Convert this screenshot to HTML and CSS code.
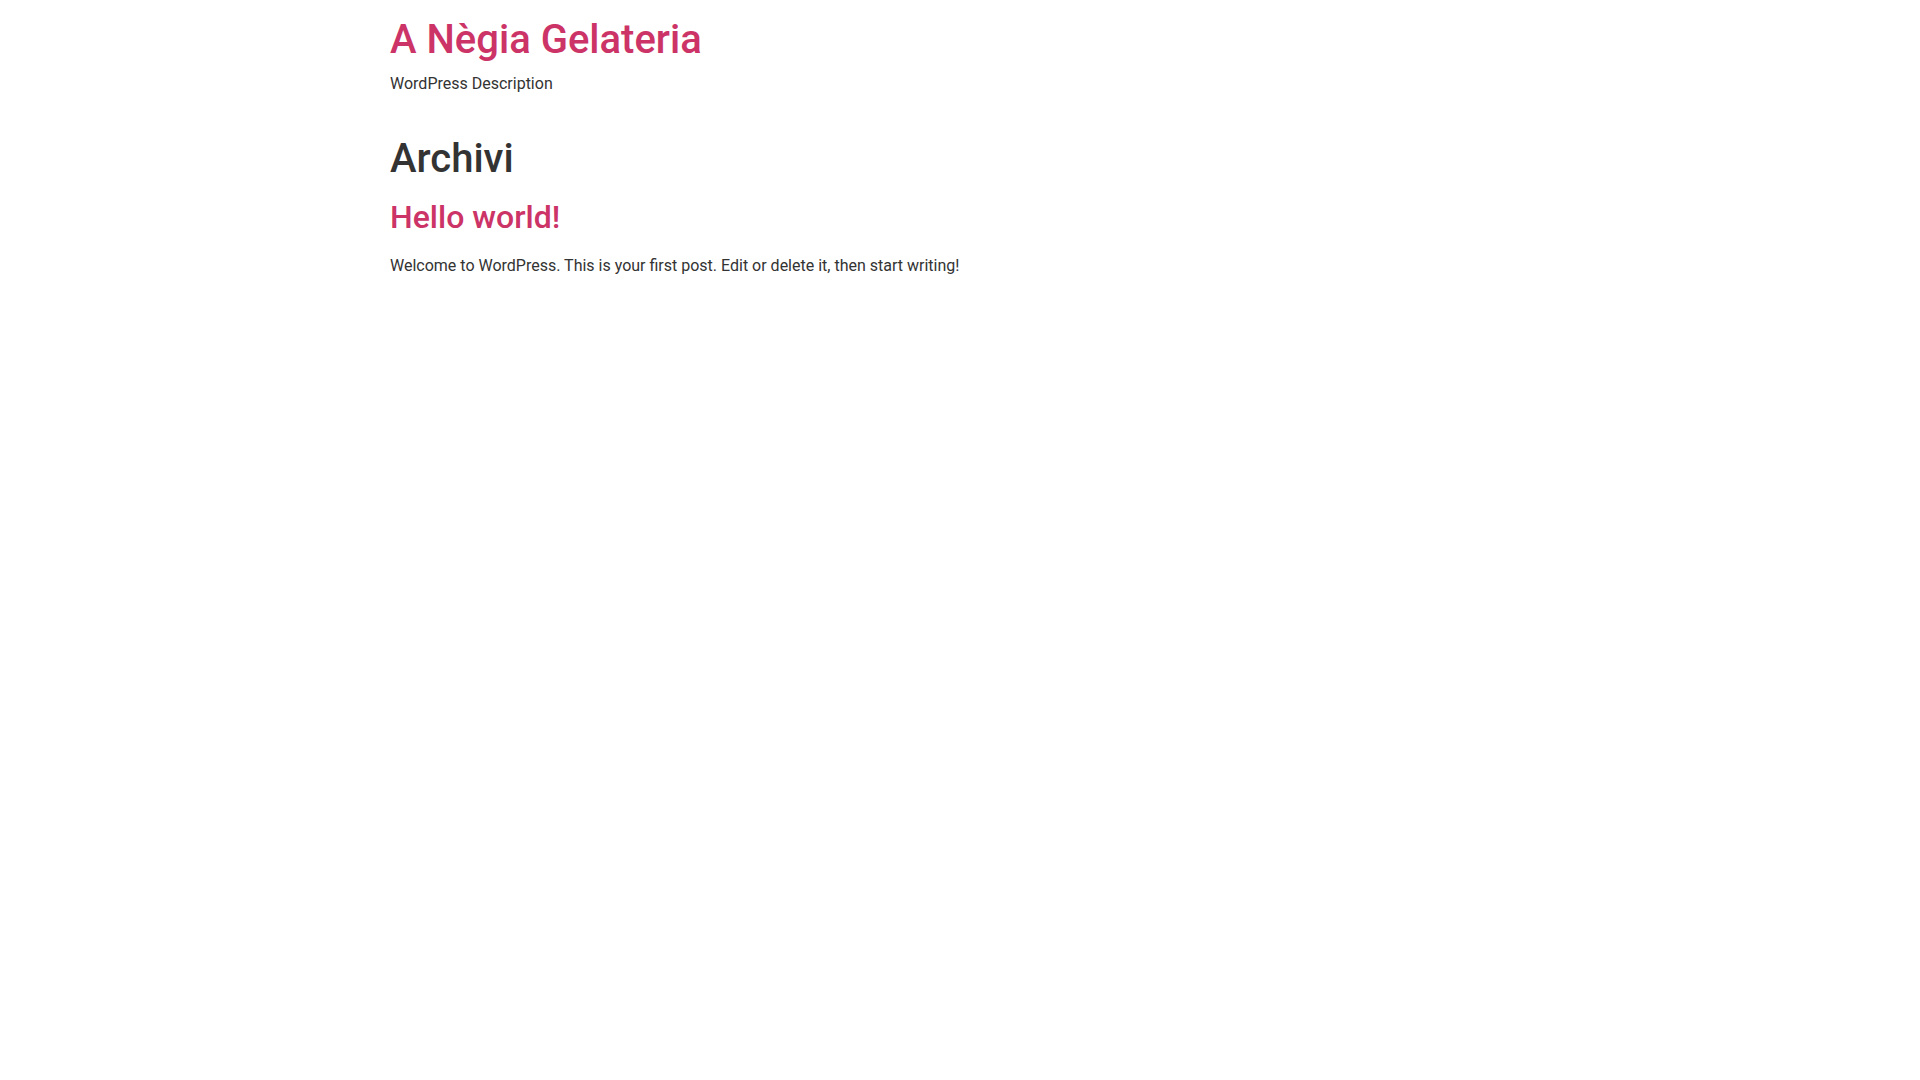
FILE: index.html
```
<!DOCTYPE html>
<html lang="it">
<head>
<meta charset="utf-8">
<title>Archivi - A Nègia Gelateria</title>
<link rel="stylesheet" href="styles.css">
</head>
<body>
<header class="site-header">
  <div class="site-branding">
    <h1 class="site-title"><a href="#" rel="home">A Nègia Gelateria</a></h1>
    <p class="site-description">WordPress Description</p>
  </div>
</header>
<main class="site-main">
  <div class="page-header">
    <h1 class="entry-title">Archivi</h1>
  </div>
  <div class="page-content">
    <article class="post">
      <h2 class="post-title"><a href="#">Hello world!</a></h2>
      <p class="post-excerpt">Welcome to WordPress. This is your first post. Edit or delete it, then start writing!</p>
    </article>
  </div>
</main>
</body>
</html>
```
FILE: styles.css
```
html, body {
  margin: 0;
  padding: 0;
}
body {
  background: #fff;
  color: #333;
  font-family: Roboto, "Liberation Sans", sans-serif;
  font-size: 16px;
  line-height: 1.5;
}
a {
  color: #c36;
  text-decoration: none;
}
h1, h2 {
  margin: 0 0 8px;
  font-weight: 500;
  line-height: 1.2;
}
h1 { font-size: 40px; }
h2 { font-size: 32px; }
p { margin: 0; }

.site-header,
.site-main {
  max-width: 1140px;
  margin: 0 auto;
}
.site-header {
  padding: 16px 0 22.5px;
}
.site-description {
  margin-bottom: 16px;
}
.page-header .entry-title {
  margin-bottom: 15.5px;
}
.post-title {
  margin-bottom: 17.5px;
}
```
